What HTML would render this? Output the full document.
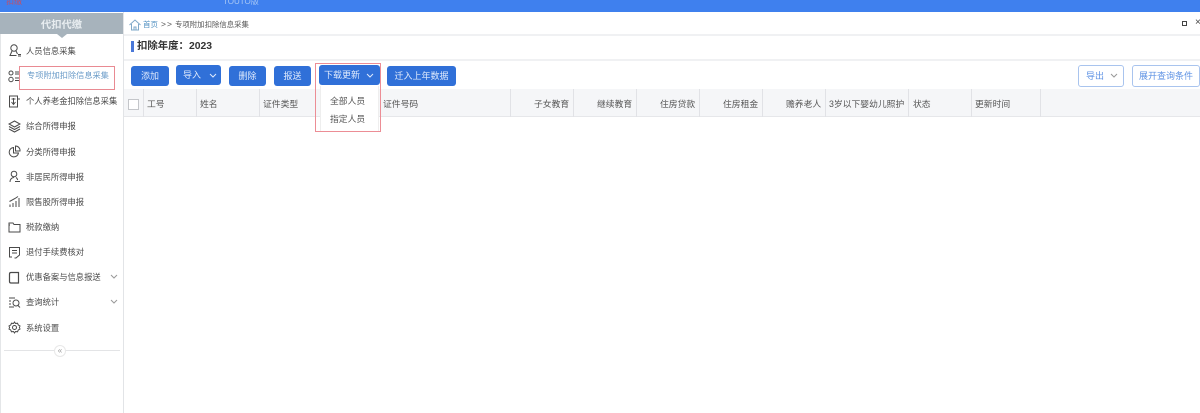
<!DOCTYPE html>
<html><head><meta charset="utf-8">
<style>
html,body{margin:0;padding:0}
body{width:1200px;height:413px;position:relative;overflow:hidden;background:#fff;font-family:"Liberation Sans","Noto Sans CJK SC",sans-serif;color:#444;font-size:8.4px}
#w{position:absolute;left:0;top:0;width:1200px;height:413px;overflow:hidden;filter:blur(.3px)}
.a{position:absolute;white-space:nowrap}
.m{position:absolute;left:26px;line-height:12px;color:#4a4a4a;white-space:nowrap;font-size:8.3px}
.btn{position:absolute;height:20px;top:66px;background:#3070d8;color:#dfeafc;border-radius:3px;font-size:9px;line-height:20px;text-align:center;white-space:nowrap}
.obtn{position:absolute;top:65px;height:20px;border:1px solid #a9c4ee;color:#5f93e4;border-radius:3px;font-size:9px;line-height:20px;text-align:center;background:#fff;white-space:nowrap}
.th{position:absolute;top:90px;height:28px;line-height:29px;color:#555;font-size:8.8px;white-space:nowrap}
.sep{position:absolute;top:89px;height:28px;width:1px;background:#e1e2e6}
svg{position:absolute;fill:none;stroke:#4a4a4a;stroke-width:1}
</style></head><body><div id="w">
<div class="a" style="left:0;top:0;width:1200px;height:12px;background:#3f80ee"></div>
<div class="a" style="left:6px;top:-4px;font-size:8px;color:#c0506a">扣缴</div>
<div class="a" style="left:223px;top:-4px;font-size:8px;color:#a9c8f5">TOUTO版</div>

<!-- sidebar -->
<div class="a" style="left:0;top:13px;width:123px;height:21px;background:#a7b3bc"></div>
<div class="a" style="left:0;top:15px;width:123px;color:#e8edf0;font-size:10.3px;line-height:21px;text-align:center;font-weight:bold">代扣代缴</div>
<div class="a" style="left:57px;top:34px;width:0;height:0;border-left:5px solid transparent;border-right:5px solid transparent;border-top:4px solid #a7b3bc"></div>
<div class="a" style="left:0;top:34px;width:1px;height:379px;background:#e4e6e8"></div>
<div class="a" style="left:123px;top:12px;width:1px;height:401px;background:#e2e4e7"></div>

<svg style="left:8px;top:44px" width="14" height="13" viewBox="0 0 14 13"><circle cx="6" cy="4" r="3.2"/><path d="M4 7L2 11.5H8.5M8 7L9.5 10M10 10.5h3M10 12h3"/></svg>
<div class="m" style="top:45px">人员信息采集</div>

<svg style="left:8px;top:70px" width="12" height="13" viewBox="0 0 12 13"><circle cx="3" cy="3" r="2"/><circle cx="3" cy="9.5" r="2.2"/><path d="M7 2h4M7 4h4M7 8h4M7 10.500h4"/></svg>
<div class="a" style="left:19px;top:66px;width:96px;height:24px;border:1px solid #e98a92;box-sizing:border-box"></div>
<div class="m" style="top:70px;left:27px;color:#6a9bc8;font-size:8.2px">专项附加扣除信息采集</div>

<svg style="left:8px;top:95px" width="13" height="13" viewBox="0 0 13 13"><path d="M1.500 1h8v11h-8zM9.500 4h2.500M5.500 3v6M3.500 7l2 2.500 2-2.500M3.500 4h4"/></svg>
<div class="m" style="top:95px">个人养老金扣除信息采集</div>

<svg style="left:8px;top:120px" width="13" height="13" viewBox="0 0 13 13"><path d="M6.500 1L12 4 6.500 7 1 4zM1 6.500l5.500 3 5.500-3M1 9l5.500 3 5.500-3"/></svg>
<div class="m" style="top:120px">综合所得申报</div>

<svg style="left:8px;top:145px" width="13" height="13" viewBox="0 0 13 13"><path d="M5.500 2.500A4.700 4.700 0 1 0 10.500 8H5.500zM7.500 1a4.500 4.500 0 0 1 4.500 5H7.500z"/></svg>
<div class="m" style="top:146px">分类所得申报</div>

<svg style="left:8px;top:170px" width="13" height="13" viewBox="0 0 13 13"><circle cx="6" cy="4" r="2.800"/><path d="M2 12c0-3 2-4.500 4-4.500M8 7.500c1 .5 1.500 1.500 1.700 2.500M7 11.500h5"/></svg>
<div class="m" style="top:171px">非居民所得申报</div>

<svg style="left:8px;top:195px" width="13" height="13" viewBox="0 0 13 13"><path d="M2 12V9.500M5 12V8M8 12V6M11 12V3M1.500 6.500L7 3.500 10 1.500"/></svg>
<div class="m" style="top:196px">限售股所得申报</div>

<svg style="left:8px;top:221px" width="13" height="12" viewBox="0 0 13 12"><path d="M1 2h4l1 1.500h6V11H1zM1 4h1"/></svg>
<div class="m" style="top:221px">税款缴纳</div>

<svg style="left:8px;top:246px" width="13" height="13" viewBox="0 0 13 13"><path d="M4 11H1.500V1.500h10V9L8 12H6.500M4 4.500h5M4 7h5"/></svg>
<div class="m" style="top:246px">退付手续费核对</div>

<svg style="left:8px;top:271px" width="13" height="13" viewBox="0 0 13 13"><path d="M3 1.500h7.500v10.500H3c-1 0-1.500-.5-1.500-1.500v-7.500c0-1 .5-1.500 1.500-1.500z" stroke-width="1.200"/></svg>
<div class="m" style="top:271px">优惠备案与信息报送</div>
<svg style="left:110px;top:274px;stroke:#999" width="8" height="5" viewBox="0 0 8 5"><path d="M1 1l3 3 3-3"/></svg>

<svg style="left:8px;top:296px" width="14" height="13" viewBox="0 0 14 13"><path d="M1 2h6M1 5h2M1 8h2M1 11h5"/><circle cx="8" cy="7" r="3"/><path d="M10 9.500l2 2"/></svg>
<div class="m" style="top:296px">查询统计</div>
<svg style="left:110px;top:299px;stroke:#999" width="8" height="5" viewBox="0 0 8 5"><path d="M1 1l3 3 3-3"/></svg>

<svg style="left:8px;top:321px" width="13" height="13" viewBox="0 0 13 13"><path d="M6.500 1l1 1.500 2-.3.800 1.800 1.700 1-.6 1.500.6 1.500-1.700 1-.8 1.800-2-.3-1 1.500-1-1.500-2 .3-.8-1.800-1.700-1 .6-1.500-.6-1.500 1.700-1 .8-1.800 2 .3z"/><circle cx="6.500" cy="6.500" r="2"/></svg>
<div class="m" style="top:322px">系统设置</div>

<div class="a" style="left:4px;top:350px;width:116px;height:1px;background:#e3e4e6"></div>
<div class="a" style="left:54px;top:345px;width:12px;height:12px;border-radius:50%;background:#fff;border:1px solid #e8e8e8;box-sizing:border-box;color:#999;font-size:8px;line-height:9px;text-align:center">«</div>

<!-- breadcrumb -->
<svg style="left:129px;top:19px;stroke:#7fa8c9" width="12" height="12" viewBox="0 0 12 12"><path d="M.5 6L6 1l5.500 5M2.500 5v6h7V5M5 11V8h2v3"/></svg>
<div class="a" style="left:143px;top:18px;line-height:13px;font-size:7.500px;color:#4f8fc0">首页</div>
<div class="a" style="left:161px;top:18px;line-height:13px;font-size:8.500px;color:#555;letter-spacing:1px">&gt;&gt;</div>
<div class="a" style="left:175px;top:18px;line-height:13px;font-size:7.400px;color:#555">专项附加扣除信息采集</div>
<div class="a" style="left:1182px;top:21px;width:3px;height:3px;border:1px solid #444"></div>
<div class="a" style="left:1195px;top:17px;font-size:10px;line-height:12px;color:#444">×</div>
<div class="a" style="left:124px;top:34px;width:1076px;height:2px;background:#f0f1f3"></div>

<!-- title -->
<div class="a" style="left:131px;top:41px;width:3px;height:11px;background:#4a78d8"></div>
<div class="a" style="left:137px;top:39px;font-size:10.400px;line-height:15px;font-weight:bold;color:#333">扣除年度：2023</div>
<div class="a" style="left:124px;top:59px;width:1076px;height:2px;background:#f0f1f3"></div>

<!-- toolbar -->
<div class="btn" style="left:131px;width:38px;">添加</div>
<div class="btn" style="left:176px;width:45px;top:65px;text-align:left;text-indent:7px">导入</div>
<svg style="left:209px;top:73px;stroke:#dfeafc" width="8" height="5" viewBox="0 0 8 5"><path d="M1 1l3 3 3-3"/></svg>
<div class="btn" style="left:229px;width:37px;">删除</div>
<div class="btn" style="left:274px;width:37px;">报送</div>
<div class="btn" style="left:319px;width:61px;top:65px;text-align:left;text-indent:5px">下载更新</div>
<svg style="left:366px;top:73px;stroke:#dfeafc" width="8" height="5" viewBox="0 0 8 5"><path d="M1 1l3 3 3-3"/></svg>
<div class="btn" style="left:387px;width:69px;">迁入上年数据</div>
<div class="obtn" style="left:1078px;width:44px;text-align:left;text-indent:7px">导出</div>
<svg style="left:1110px;top:73px;stroke:#999" width="8" height="5" viewBox="0 0 8 5"><path d="M1 1l3 3 3-3"/></svg>
<div class="obtn" style="left:1132px;width:66px;">展开查询条件</div>

<!-- table -->
<div class="a" style="left:124px;top:89px;width:1076px;height:28px;background:#f5f6f8;border-bottom:1px solid #e6e7ea;box-sizing:border-box"></div>
<div class="a" style="left:128px;top:99px;width:9px;height:9px;border:1px solid #c4c6ca;background:#fff"></div>
<div class="sep" style="left:143px"></div>
<div class="sep" style="left:196px"></div>
<div class="sep" style="left:259px"></div>
<div class="sep" style="left:510px"></div>
<div class="sep" style="left:573px"></div>
<div class="sep" style="left:636px"></div>
<div class="sep" style="left:699px"></div>
<div class="sep" style="left:762px"></div>
<div class="sep" style="left:825px"></div>
<div class="sep" style="left:908px"></div>
<div class="sep" style="left:971px"></div>
<div class="sep" style="left:1040px"></div>
<div class="th" style="left:147px">工号</div>
<div class="th" style="left:200px">姓名</div>
<div class="th" style="left:263px">证件类型</div>
<div class="th" style="left:383px">证件号码</div>
<div class="th" style="left:534px">子女教育</div>
<div class="th" style="left:597px">继续教育</div>
<div class="th" style="left:660px">住房贷款</div>
<div class="th" style="left:723px">住房租金</div>
<div class="th" style="left:786px">赡养老人</div>
<div class="th" style="left:829px">3岁以下婴幼儿照护</div>
<div class="th" style="left:913px">状态</div>
<div class="th" style="left:975px">更新时间</div>

<!-- dropdown -->
<div class="a" style="left:320px;top:86px;width:59px;height:45px;background:#fff;border-left:1px solid #eee;border-right:1px solid #eee;box-sizing:border-box"></div>
<div class="a" style="left:315px;top:63px;width:66px;height:69px;border:1px solid #ec8d95;box-sizing:border-box"></div>
<div class="a" style="left:330px;top:95px;font-size:8.800px;line-height:12px;color:#555">全部人员</div>
<div class="a" style="left:330px;top:113px;font-size:8.800px;line-height:12px;color:#555">指定人员</div>
</div></body></html>
